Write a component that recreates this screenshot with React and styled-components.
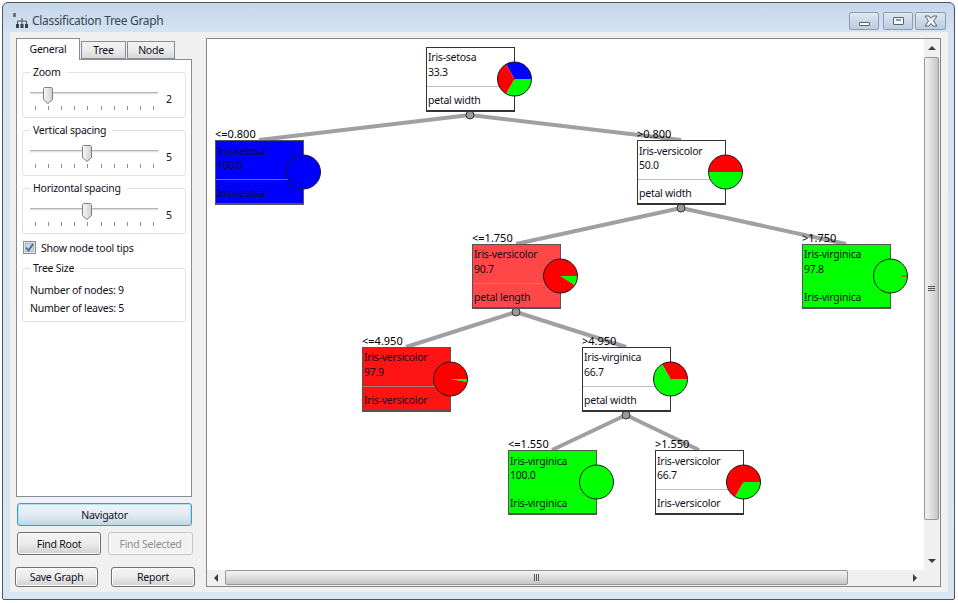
import React from 'react';
import styled, { createGlobalStyle } from 'styled-components';

const GlobalStyle = createGlobalStyle`
  html, body {
    margin: 0;
    background: #fff;
  }
  * {
    box-sizing: border-box;
  }
`;

const UI_FONT = `"Noto Sans", "Liberation Sans", sans-serif`;
const CANVAS_X = 207;
const CANVAS_Y = 39;
const PIE_R = 17;

const RED = '#ff0000';
const GREEN = '#00ff00';
const BLUE = '#0000ff';

const nodes = [
  {
    id: 'root', x: 426, y: 47, bg: '#ffffff', title: 'Iris-setosa', value: '33.3', foot: 'petal width',
    pie: [[-120, 0, BLUE], [0, 120, GREEN], [120, 240, RED]],
  },
  {
    id: 'setosa', x: 215, y: 140, titleTop: 3, parent: 'root', label: '<=0.800', bg: BLUE, title: 'Iris-setosa', value: '100.0', foot: 'Iris-setosa',
    pie: [[0, 360, BLUE]],
  },
  {
    id: 'vers', x: 637, y: 140, titleTop: 3, parent: 'root', label: '>0.800', bg: '#ffffff', title: 'Iris-versicolor', value: '50.0', foot: 'petal width',
    pie: [[0, 180, GREEN], [180, 360, RED]],
  },
  {
    id: 'vers2', x: 472, y: 244, parent: 'vers', label: '<=1.750', bg: '#ff4747', title: 'Iris-versicolor', value: '90.7', foot: 'petal length',
    pie: [[0, 33, GREEN], [33, 360, RED]],
  },
  {
    id: 'virg', x: 802, y: 244, parent: 'vers', label: '>1.750', bg: GREEN, title: 'Iris-virginica', value: '97.8', foot: 'Iris-virginica',
    pie: [[0, 360, GREEN]], sliver: true,
  },
  {
    id: 'vers3', x: 362, y: 347, parent: 'vers2', label: '<=4.950', bg: '#ff1414', title: 'Iris-versicolor', value: '97.9', foot: 'Iris-versicolor',
    pie: [[0, 10, GREEN], [10, 360, RED]],
  },
  {
    id: 'virg2', x: 582, y: 347, parent: 'vers2', label: '>4.950', bg: '#ffffff', title: 'Iris-virginica', value: '66.7', foot: 'petal width',
    pie: [[-120, 0, RED], [0, 240, GREEN]],
  },
  {
    id: 'virg3', x: 508, y: 450, titleTop: 3, parent: 'virg2', label: '<=1.550', bg: GREEN, title: 'Iris-virginica', value: '100.0', foot: 'Iris-virginica',
    pie: [[0, 360, GREEN]],
  },
  {
    id: 'vers4', x: 655, y: 450, titleTop: 3, parent: 'virg2', label: '>1.550', bg: '#ffffff', title: 'Iris-versicolor', value: '66.7', foot: 'Iris-versicolor',
    pie: [[0, 120, GREEN], [120, 360, RED]],
  },
];

const Window = styled.div`
  width: 953px;
  height: 598px;
  margin: 2px 0 0 2px;
  border: 1px solid #50555c;
  border-radius: 6px 6px 2px 2px;
  background: linear-gradient(180deg, #c3d6ea 0, #d5e3f2 30px, #d8e6f4 100%);
  display: flex;
  flex-direction: column;
  font-family: ${UI_FONT};
  font-size: 10.5px;
  letter-spacing: -0.25px;
  color: #10101c;
`;

const TitleBar = styled.div`
  height: 29px;
  flex: none;
  display: flex;
  align-items: flex-start;
  padding: 9px 8px 0 10px;
`;

const TitleIcon = styled.svg`
  width: 15px;
  height: 16px;
  flex: none;
  margin-top: 1px;
`;

const TitleText = styled.div`
  margin-left: 4px;
  font-size: 12px;
  letter-spacing: -0.32px;
  line-height: 17px;
  color: #3a4650;
  flex: 1;
`;

const WinButtons = styled.div`
  display: flex;
  flex: none;
`;

const WinButton = styled.div`
  width: ${(p) => p.$w}px;
  height: 18px;
  margin-left: ${(p) => p.$gap}px;
  border: 1px solid #8c9cae;
  border-radius: 2px;
  background: linear-gradient(180deg, #dfe9f3 0, #c9d8e8 50%, #bccde0 100%);
  display: flex;
  align-items: center;
  justify-content: center;
`;

const MinGlyph = styled.div`
  width: 11px;
  height: 4px;
  margin-top: 5px;
  background: #f4f6f8;
  border: 1px solid #59626d;
  border-radius: 1px;
`;

const MaxGlyph = styled.div`
  width: 11px;
  height: 8px;
  background: #f4f6f8;
  border: 1px solid #59626d;
  border-radius: 1px;
  &::after {
    content: '';
    display: block;
    width: 5px;
    height: 2px;
    margin: 1px 2px;
    background: #8e98a3;
  }
`;

const Content = styled.div`
  flex: 1;
  margin: 0 6px 7px 7px;
  padding: 6px 7px 5px 5px;
  background: #f0f0f0;
  display: flex;
  gap: 11px;
  min-height: 0;
`;

const LeftColumn = styled.div`
  width: 180px;
  flex: none;
  display: flex;
  flex-direction: column;
`;

const TabStrip = styled.div`
  height: 21px;
  flex: none;
  margin-left: 1px;
  display: flex;
  align-items: flex-end;
  position: relative;
  z-index: 1;
`;

const Tab = styled.div`
  width: ${(p) => p.$w}px;
  margin-left: ${(p) => p.$gap}px;
  height: ${(p) => (p.$active ? 22 : 18)}px;
  margin-bottom: ${(p) => (p.$active ? -1 : 0)}px;
  border: 1px solid #898c95;
  border-bottom: ${(p) => (p.$active ? 'none' : '1px solid #898c95')};
  background: ${(p) => (p.$active ? '#fff' : 'linear-gradient(180deg, #f2f2f2 0, #ebebeb 50%, #d8d8d8 100%)')};
  text-align: center;
  line-height: ${(p) => (p.$active ? 20 : 16)}px;
`;

const TabPane = styled.div`
  flex: 1;
  width: 176px;
  margin-left: 1px;
  border: 1px solid #898c95;
  background: #fff;
  padding: 12px 5px 0;
  display: flex;
  flex-direction: column;
`;

const Group = styled.div`
  position: relative;
  flex: none;
  height: ${(p) => p.$h}px;
  margin-top: ${(p) => p.$top}px;
  border: 1px solid #dce2e8;
  border-radius: 3px;
  padding: ${(p) => p.$pad};
`;

const Legend = styled.div`
  position: absolute;
  left: 7px;
  top: -7px;
  padding: 0 6px 0 3px;
  background: #fff;
  line-height: 13px;
`;

const SliderRow = styled.div`
  display: flex;
`;

const Slider = styled.div`
  position: relative;
  width: 128px;
  height: 26px;
  flex: none;
`;

const Track = styled.div`
  position: absolute;
  left: 0;
  right: 0;
  top: 5px;
  height: 3px;
  background: #e2e2e2;
  border-top: 1px solid #b4b4b4;
  border-bottom: 1px solid #f4f4f4;
`;

const Thumb = styled.svg`
  position: absolute;
  top: 0;
  width: 10px;
  height: 17px;
`;

const Ticks = styled.div`
  position: absolute;
  left: 5px;
  top: 19px;
  width: 119px;
  display: flex;
  justify-content: space-between;
`;

const Tick = styled.div`
  width: 1px;
  height: 4px;
  background: #8f8f8f;
`;

const SliderValue = styled.div`
  margin: 5px 0 0 8px;
  line-height: 14px;
`;

const CheckRow = styled.div`
  display: flex;
  align-items: center;
  margin: 7px 0 0 1px;
  height: 13px;
`;

const CheckBox = styled.svg`
  width: 13px;
  height: 13px;
  flex: none;
  margin-right: 5px;
`;

const InfoLine = styled.div`
  line-height: 18px;
`;

const WideButton = styled.div`
  flex: none;
  width: 175px;
  height: 23px;
  margin: 6px 0 0 2px;
  border: 1px solid #3c9fd0;
  border-radius: 3px;
  background: linear-gradient(180deg, #eef4f8 0, #e2ecf2 50%, #c4d6e2 100%);
  box-shadow: inset 0 0 0 1px #a8e0f6;
  text-align: center;
  line-height: 22px;
`;

const ButtonRow = styled.div`
  flex: none;
  display: flex;
  margin: ${(p) => p.$margin};
  gap: ${(p) => p.$gap}px;
`;

const PushButton = styled.div`
  width: ${(p) => p.$w}px;
  height: ${(p) => p.$h}px;
  border: 1px solid ${(p) => (p.$disabled ? '#c4c4c4' : '#707070')};
  border-radius: 3px;
  background: ${(p) =>
    p.$disabled ? '#f2f2f2' : 'linear-gradient(180deg, #f4f4f4 0, #ebebeb 50%, #d0d0d0 100%)'};
  box-shadow: inset 0 0 0 1px ${(p) => (p.$disabled ? '#f6f6f6' : '#fafafa')};
  color: ${(p) => (p.$disabled ? '#8f8f8f' : 'inherit')};
  text-align: center;
  line-height: ${(p) => p.$lh}px;
`;

const ScrollPane = styled.div`
  flex: 1;
  min-width: 0;
  border: 1px solid #828790;
  background: #f0f0f0;
  display: grid;
  grid-template-columns: 1fr 16px;
  grid-template-rows: 1fr 16px;
`;

const GraphView = styled.div`
  position: relative;
  overflow: hidden;
  background: #fff;
`;

const EdgeLayer = styled.svg`
  position: absolute;
  left: 0;
  top: 0;
  width: 100%;
  height: 100%;
`;

const NodeBox = styled.div`
  position: absolute;
  width: 89px;
  height: 65px;
  border: 1px solid ${(p) => (p.$bg === '#ffffff' ? '#333' : '#555')};
  border-bottom-width: 2px;
  background: ${(p) => p.$bg};
  color: #10101c;
`;

const NodeLine = styled.div`
  position: absolute;
  left: 1px;
  top: ${(p) => p.$top}px;
  line-height: 14px;
  white-space: nowrap;
`;

const NodeDivider = styled.div`
  position: absolute;
  left: 0;
  right: 0;
  top: 38px;
  height: 1px;
  background: ${(p) => (p.$bg === '#ffffff' ? '#bdbdbd' : 'rgba(150, 150, 150, 0.75)')};
`;

const EdgeLabel = styled.div`
  position: absolute;
  font-size: 11px;
  letter-spacing: 0;
  line-height: 13px;
  white-space: nowrap;
  color: #000;
`;

const VTrack = styled.div`
  display: flex;
  flex-direction: column;
`;

const HTrack = styled.div`
  display: flex;
`;

const TrackGap = styled.div`
  flex: 1;
`;

const ArrowCell = styled.div`
  flex: none;
  width: ${(p) => (p.$vertical ? '15px' : '18px')};
  height: ${(p) => (p.$vertical ? '18px' : '15px')};
  display: flex;
  align-items: center;
  justify-content: center;
`;

const Arrow = styled.div`
  width: 0;
  height: 0;
  border-style: solid;
  border-color: transparent;
  ${(p) => p.$dir === 'up' && 'border-width: 0 4px 4px; border-bottom-color: #3c3c3c;'}
  ${(p) => p.$dir === 'down' && 'border-width: 4px 4px 0; border-top-color: #3c3c3c;'}
  ${(p) => p.$dir === 'left' && 'border-width: 4px 4px 4px 0; border-right-color: #3c3c3c;'}
  ${(p) => p.$dir === 'right' && 'border-width: 4px 0 4px 4px; border-left-color: #3c3c3c;'}
`;

const VThumb = styled.div`
  width: 15px;
  height: 463px;
  flex: none;
  border: 1px solid #979797;
  border-radius: 2px;
  background: linear-gradient(90deg, #f2f2f2 0, #dedede 50%, #c4c4c4 100%);
  display: flex;
  align-items: center;
  justify-content: center;
`;

const HThumb = styled.div`
  width: 623px;
  height: 15px;
  flex: none;
  border: 1px solid #979797;
  border-radius: 2px;
  background: linear-gradient(180deg, #f2f2f2 0, #dedede 50%, #c4c4c4 100%);
  display: flex;
  align-items: center;
  justify-content: center;
`;

const GripV = styled.div`
  width: 7px;
  height: 5px;
  border-top: 1px solid #555;
  border-bottom: 1px solid #555;
  background: linear-gradient(180deg, transparent 1px, #555 1px, #555 2px, transparent 2px);
`;

const GripH = styled.div`
  width: 5px;
  height: 7px;
  border-left: 1px solid #555;
  border-right: 1px solid #555;
  background: linear-gradient(90deg, transparent 1px, #555 1px, #555 2px, transparent 2px);
`;

const Corner = styled.div`
  background: #f0f0f0;
`;

const wedgePath = (cx, cy, r, from, to) => {
  const rad = (a) => (a * Math.PI) / 180;
  const x1 = cx + r * Math.cos(rad(from));
  const y1 = cy + r * Math.sin(rad(from));
  const x2 = cx + r * Math.cos(rad(to));
  const y2 = cy + r * Math.sin(rad(to));
  const large = to - from > 180 ? 1 : 0;
  return `M${cx} ${cy}L${x1} ${y1}A${r} ${r} 0 ${large} 1 ${x2} ${y2}Z`;
};

const Pie = ({ node }) => {
  const cx = node.x - CANVAS_X + 88.5;
  const cy = node.y - CANVAS_Y + 32;
  const full = node.pie.length === 1;
  return (
    <g>
      {full ? (
        <circle cx={cx} cy={cy} r={PIE_R} fill={node.pie[0][2]} />
      ) : (
        node.pie.map(([from, to, color]) => (
          <path key={from} d={wedgePath(cx, cy, PIE_R, from, to)} fill={color} />
        ))
      )}
      {node.sliver && <line x1={cx + 11} y1={cy} x2={cx + 17} y2={cy} stroke={RED} strokeWidth="1" />}
      <circle cx={cx} cy={cy} r={PIE_R} fill="none" stroke="#1c1c1c" strokeWidth="1" />
    </g>
  );
};

const TreeGraph = () => {
  const byId = Object.fromEntries(nodes.map((n) => [n.id, n]));
  const parents = [...new Set(nodes.filter((n) => n.parent).map((n) => n.parent))];
  return (
    <GraphView>
      <EdgeLayer>
        {nodes
          .filter((n) => n.parent)
          .map((n) => {
            const p = byId[n.parent];
            return (
              <line
                key={n.id}
                x1={p.x - CANVAS_X + 44}
                y1={p.y - CANVAS_Y + 68}
                x2={n.x - CANVAS_X + 44}
                y2={n.y - CANVAS_Y}
                stroke="#a0a0a4"
                strokeWidth="4"
              />
            );
          })}
        {parents.map((id) => (
          <circle
            key={id}
            cx={byId[id].x - CANVAS_X + 44}
            cy={byId[id].y - CANVAS_Y + 68}
            r="4"
            fill="#9a9a9a"
            stroke="#333"
            strokeWidth="1"
          />
        ))}
      </EdgeLayer>
      {nodes.map((n) => (
        <React.Fragment key={n.id}>
          {n.label && (
            <EdgeLabel style={{ left: n.x - CANVAS_X, top: n.y - CANVAS_Y - 13 }}>{n.label}</EdgeLabel>
          )}
          <NodeBox $bg={n.bg} style={{ left: n.x - CANVAS_X, top: n.y - CANVAS_Y }}>
            <NodeLine $top={n.titleTop || 2}>{n.title}</NodeLine>
            <NodeLine $top={17}>{n.value}</NodeLine>
            <NodeDivider $bg={n.bg} />
            <NodeLine $top={45}>{n.foot}</NodeLine>
          </NodeBox>
        </React.Fragment>
      ))}
      <EdgeLayer>
        {nodes.map((n) => (
          <Pie key={n.id} node={n} />
        ))}
      </EdgeLayer>
    </GraphView>
  );
};

const SliderControl = ({ id, value }) => (
  <SliderRow>
    <Slider>
      <Track />
      <Ticks>
        {Array.from({ length: 10 }, (_, i) => (
          <Tick key={i} />
        ))}
      </Ticks>
      <Thumb viewBox="0 0 10 17" style={{ left: (value - 1) * 13 }}>
        <defs>
          <linearGradient id={`thumb-${id}`} x1="0" x2="1" y1="0" y2="0">
            <stop offset="0" stopColor="#fafafa" />
            <stop offset="1" stopColor="#cfcfcf" />
          </linearGradient>
        </defs>
        <path
          d="M1.5 .5H8.5L9.5 1.5V12.5L5 16.5L.5 12.5V1.5Z"
          fill={`url(#thumb-${id})`}
          stroke="#7f7f7f"
        />
      </Thumb>
    </Slider>
    <SliderValue>{value}</SliderValue>
  </SliderRow>
);

const App = () => (
  <>
    <GlobalStyle />
    <Window>
      <TitleBar>
        <TitleIcon viewBox="0 0 15 16">
          <rect x="0" y="0" width="3" height="4" fill="#6b7178" />
          <path d="M9 5V8M4.5 8H13.5M4.5 8V11M9 8V11M13.5 8V11" stroke="#4c5560" fill="none" />
          <rect x="3" y="11" width="3" height="4" fill="#39414a" />
          <rect x="7.5" y="11" width="3" height="4" fill="#39414a" />
          <rect x="12" y="11" width="3" height="4" fill="#39414a" />
        </TitleIcon>
        <TitleText>Classification Tree Graph</TitleText>
        <WinButtons>
          <WinButton $w={30} $gap={0}>
            <MinGlyph />
          </WinButton>
          <WinButton $w={30} $gap={4}>
            <MaxGlyph />
          </WinButton>
          <WinButton $w={31} $gap={2}>
            <svg width="16" height="12" viewBox="0 0 16 12">
              <path
                d="M2 1H6L8 3.5L10 1H14L10.5 6L14 11H10L8 8.5L6 11H2L5.5 6Z"
                fill="#f4f6f8"
                stroke="#59626d"
              />
            </svg>
          </WinButton>
        </WinButtons>
      </TitleBar>
      <Content>
        <LeftColumn>
          <TabStrip>
            <Tab $active $w={64} $gap={0}>General</Tab>
            <Tab $w={45} $gap={1}>Tree</Tab>
            <Tab $w={48} $gap={1}>Node</Tab>
          </TabStrip>
          <TabPane>
            <Group $h={46} $top={0} $pad="14px 0 0 7px">
              <Legend>Zoom</Legend>
              <SliderControl id="zoom" value={2} />
            </Group>
            <Group $h={46} $top={12} $pad="14px 0 0 7px">
              <Legend>Vertical spacing</Legend>
              <SliderControl id="vertical" value={5} />
            </Group>
            <Group $h={46} $top={12} $pad="14px 0 0 7px">
              <Legend>Horizontal spacing</Legend>
              <SliderControl id="horizontal" value={5} />
            </Group>
            <CheckRow>
              <CheckBox viewBox="0 0 13 13">
                <rect x=".5" y=".5" width="12" height="12" fill="#dfe3e8" stroke="#8e8f8f" />
                <rect x="2.5" y="2.5" width="8" height="8" fill="#cfd6de" stroke="#b0b8c0" />
                <path d="M3 6.5L5.5 9.5L10 3" fill="none" stroke="#3d6c9e" strokeWidth="1.8" />
              </CheckBox>
              Show node tool tips
            </CheckRow>
            <Group $h={54} $top={14} $pad="12px 0 0 7px">
              <Legend>Tree Size</Legend>
              <InfoLine>Number of nodes: 9</InfoLine>
              <InfoLine>Number of leaves: 5</InfoLine>
            </Group>
          </TabPane>
          <WideButton>Navigator</WideButton>
          <ButtonRow $margin="6px 0 0 2px" $gap={7}>
            <PushButton $w={84} $h={23} $lh={22}>Find Root</PushButton>
            <PushButton $w={85} $h={23} $lh={22} $disabled>Find Selected</PushButton>
          </ButtonRow>
          <ButtonRow $margin="12px 0 0" $gap={13}>
            <PushButton $w={83} $h={20} $lh={18}>Save Graph</PushButton>
            <PushButton $w={84} $h={20} $lh={18}>Report</PushButton>
          </ButtonRow>
        </LeftColumn>
        <ScrollPane>
          <TreeGraph />
          <VTrack>
            <ArrowCell $vertical><Arrow $dir="up" /></ArrowCell>
            <VThumb><GripV /></VThumb>
            <TrackGap />
            <ArrowCell $vertical><Arrow $dir="down" /></ArrowCell>
          </VTrack>
          <HTrack>
            <ArrowCell><Arrow $dir="left" /></ArrowCell>
            <HThumb><GripH /></HThumb>
            <TrackGap />
            <ArrowCell><Arrow $dir="right" /></ArrowCell>
          </HTrack>
          <Corner />
        </ScrollPane>
      </Content>
    </Window>
  </>
);

export default App;
